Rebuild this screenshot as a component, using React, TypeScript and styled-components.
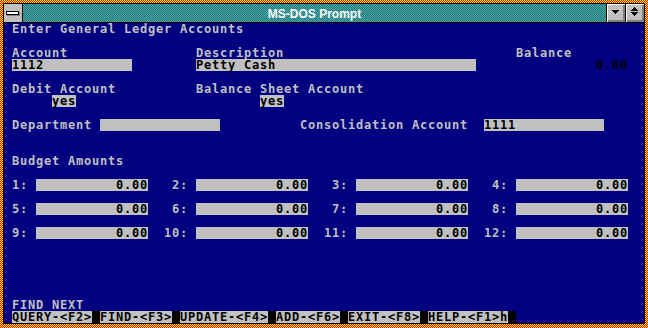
import React from 'react';
import styled, { createGlobalStyle } from 'styled-components';

const Global = createGlobalStyle`
  html, body { margin: 0; padding: 0; background: #000; }
  body { width: 648px; height: 328px; overflow: hidden; }
`;

const Frame = styled.div`
  box-sizing: border-box;
  width: 648px;
  height: 328px;
  padding: 3px 3px 4px 3px;
  background: repeating-conic-gradient(#ff0000 0% 25%, #ffff00 0% 50%) 0 0 / 2px 2px;
  display: flex;
`;

const Window = styled.div`
  flex: 1;
  border: 1px solid #000;
  display: flex;
  flex-direction: column;
  background: #000;
`;

const TitleBar = styled.div`
  height: 18px;
  display: flex;
  border-bottom: 1px solid #000;
`;

const ControlBox = styled.div`
  width: 18px;
  background: #c0c0c0;
  border-right: 1px solid #000;
  display: flex;
`;

const Caption = styled.div`
  flex: 1;
  background: repeating-conic-gradient(#008080 0% 25%, #6a9f9f 0% 50%) 0 0 / 2px 2px;
  color: #fff;
  font: bold 12px "Liberation Sans", Arial, sans-serif;
  display: flex;
  align-items: center;
  justify-content: center;
  padding-top: 1px;
  box-sizing: border-box;
`;

const SizeButton = styled.div`
  width: 18px;
  border-left: 1px solid #000;
  background: #c0c0c0;
  box-shadow: inset 1px 1px #fff, inset -1px -1px #808080, inset -2px -2px #808080;
  display: flex;
`;

const Screen = styled.div`
  height: 300px;
  background: #000080;
  display: grid;
  grid-template-columns: repeat(80, 8px);
  grid-template-rows: repeat(25, 12px);
  font-family: "DejaVu Sans Mono", "Liberation Mono", monospace;
  font-weight: bold;
  font-size: 12px;
  letter-spacing: 0.776px;
  line-height: 12px;
  color: #c0c0c0;
  white-space: pre;
`;

type Cell = { $row: number; $col: number; $w: number };

const Label = styled.span<Cell>`
  grid-row: ${(p) => p.$row + 1};
  grid-column: ${(p) => p.$col + 1} / span ${(p) => p.$w};
`;

const Field = styled.span<Cell & { $right?: boolean }>`
  grid-row: ${(p) => p.$row + 1};
  grid-column: ${(p) => p.$col + 1} / span ${(p) => p.$w};
  background: #c0c0c0;
  color: #000;
  text-align: ${(p) => (p.$right ? 'right' : 'left')};
`;

const DarkValue = styled.span<Cell>`
  grid-row: ${(p) => p.$row + 1};
  grid-column: ${(p) => p.$col + 1} / span ${(p) => p.$w};
  color: #000;
  text-align: right;
`;

const BudgetRow = styled.div<{ $row: number }>`
  grid-row: ${(p) => p.$row + 1};
  grid-column: 1 / -1;
  display: grid;
  grid-template-columns: repeat(4, 160px);
`;

const BudgetGroup = styled.div`
  display: flex;
  gap: 8px;
`;

const BudgetNum = styled.span`
  width: 24px;
  text-align: right;
`;

const BudgetField = styled.span`
  width: 112px;
  background: #c0c0c0;
  color: #000;
  text-align: right;
`;

const MenuBar = styled.div<{ $row: number }>`
  grid-row: ${(p) => p.$row + 1};
  grid-column: 2 / span 63;
  display: flex;
  gap: 8px;
  padding-right: 8px;
  background: #000;
  justify-self: start;
`;

const MenuItem = styled.span`
  background: #c0c0c0;
  color: #000;
`;

const L = (row: number, col: number, text: string) => (
  <Label $row={row} $col={col} $w={text.length}>
    {text}
  </Label>
);

const ControlIcon = () => (
  <svg width="18" height="18" viewBox="0 0 18 18" shapeRendering="crispEdges">
    <rect x="2" y="7" width="13" height="4" fill="#000" />
    <rect x="3" y="8" width="11" height="2" fill="#fff" />
    <rect x="3" y="11" width="13" height="1" fill="#808080" />
    <rect x="15" y="8" width="1" height="4" fill="#808080" />
  </svg>
);

const DownTri = ({ y }: { y: number }) => (
  <>
    <rect x="5" y={y} width="7" height="1" fill="#000" />
    <rect x="6" y={y + 1} width="5" height="1" fill="#000" />
    <rect x="7" y={y + 2} width="3" height="1" fill="#000" />
    <rect x="8" y={y + 3} width="1" height="1" fill="#000" />
  </>
);

const UpTri = ({ y }: { y: number }) => (
  <>
    <rect x="8" y={y} width="1" height="1" fill="#000" />
    <rect x="7" y={y + 1} width="3" height="1" fill="#000" />
    <rect x="6" y={y + 2} width="5" height="1" fill="#000" />
    <rect x="5" y={y + 3} width="7" height="1" fill="#000" />
  </>
);

const MinIcon = () => (
  <svg width="18" height="18" viewBox="0 0 18 18" shapeRendering="crispEdges">
    <DownTri y={6} />
  </svg>
);

const RestoreIcon = () => (
  <svg width="18" height="18" viewBox="0 0 18 18" shapeRendering="crispEdges">
    <UpTri y={3} />
    <DownTri y={8} />
  </svg>
);

const budget = [
  [1, 2, 3, 4],
  [5, 6, 7, 8],
  [9, 10, 11, 12],
];

const menu = ['QUERY-<F2>', 'FIND-<F3>', 'UPDATE-<F4>', 'ADD-<F6>', 'EXIT-<F8>', 'HELP-<F1>h'];

export default function App() {
  return (
    <>
      <Global />
      <Frame>
        <Window>
          <TitleBar>
            <ControlBox>
              <ControlIcon />
            </ControlBox>
            <Caption>MS-DOS Prompt</Caption>
            <SizeButton>
              <MinIcon />
            </SizeButton>
            <SizeButton>
              <RestoreIcon />
            </SizeButton>
          </TitleBar>
          <Screen>
            {L(0, 1, 'Enter General Ledger Accounts')}
            {L(2, 1, 'Account')}
            {L(2, 24, 'Description')}
            {L(2, 64, 'Balance')}
            <Field $row={3} $col={1} $w={15}>1112</Field>
            <Field $row={3} $col={24} $w={35}>Petty Cash</Field>
            <DarkValue $row={3} $col={74} $w={4}>0.00</DarkValue>
            {L(5, 1, 'Debit Account')}
            {L(5, 24, 'Balance Sheet Account')}
            <Field $row={6} $col={6} $w={3}>yes</Field>
            <Field $row={6} $col={32} $w={3}>yes</Field>
            {L(8, 1, 'Department')}
            <Field $row={8} $col={12} $w={15} />
            {L(8, 37, 'Consolidation Account')}
            <Field $row={8} $col={60} $w={15}>1111</Field>
            {L(11, 1, 'Budget Amounts')}
            {budget.map((nums, i) => (
              <BudgetRow key={i} $row={13 + i * 2}>
                {nums.map((n) => (
                  <BudgetGroup key={n}>
                    <BudgetNum>{n}:</BudgetNum>
                    <BudgetField>0.00</BudgetField>
                  </BudgetGroup>
                ))}
              </BudgetRow>
            ))}
            {L(23, 1, 'FIND NEXT')}
            <MenuBar $row={24}>
              {menu.map((m) => (
                <MenuItem key={m}>{m}</MenuItem>
              ))}
            </MenuBar>
          </Screen>
        </Window>
      </Frame>
    </>
  );
}
